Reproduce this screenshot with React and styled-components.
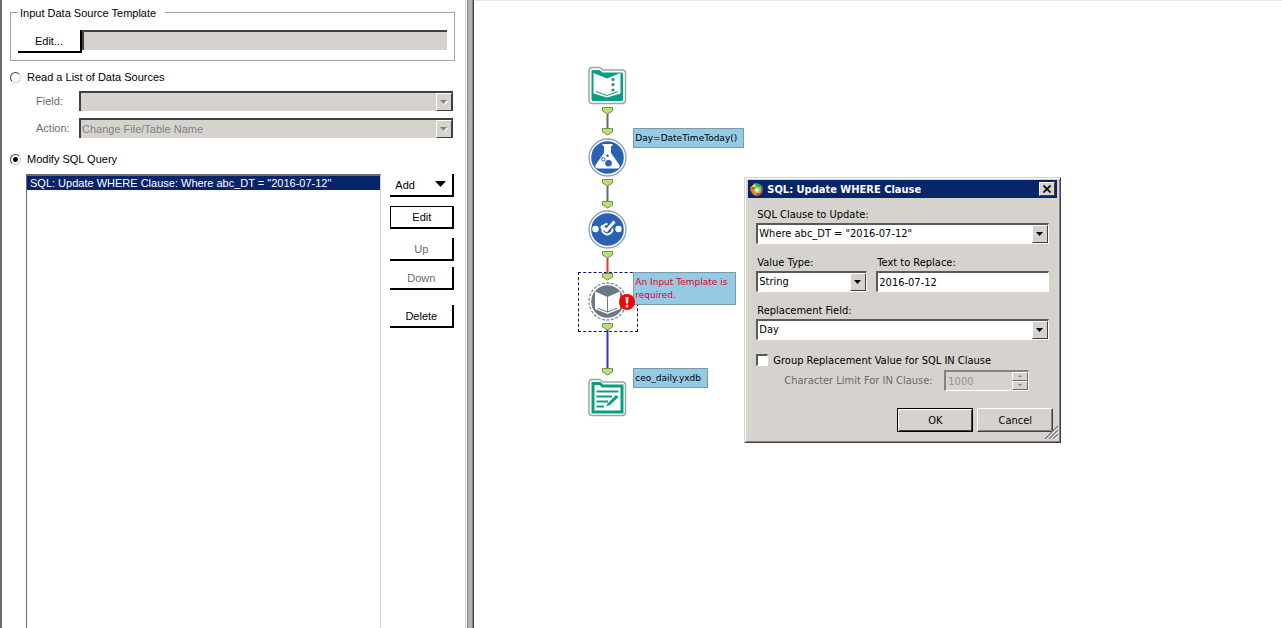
import React, {useState} from "react";
import styled, {createGlobalStyle} from "styled-components";

const GlobalStyle = createGlobalStyle`
	* {
		box-sizing: border-box;
	}
	body {
		margin: 0;
		background: #ffffff;
		color: #000000;
		font-family: "Liberation Sans", Arial, sans-serif;
		font-size: 11px;
	}
	button, input, select {
		font: inherit;
		color: inherit;
		margin: 0;
		border-radius: 0;
		outline: none;
	}
`;

const face = "#d6d3ce";

const Page = styled.div`
	display: flex;
	min-height: 100vh;
`;

/* Configuration panel */

const ConfigPanel = styled.form`
	display: flex;
	flex-direction: column;
	width: 37%;
	min-width: 400px;
	padding: 4px 19px 0 8px;
	border-left: 2px solid #6b6b6b;
`;

const Splitter = styled.div`
	display: flex;
	width: 9px;
	margin-left: -9px;
	border-left: 1px solid #d6d3ce;
	&::before {
		content: "";
		width: 4px;
		margin-left: 1px;
		background: #b4b2b4;
		border-left: 1px solid #848284;
	}
`;

const CanvasEdge = styled.div`
	width: 2px;
	margin-left: -2px;
	background: #404040;
	border-left: 1px solid #848284;
`;

const TemplateGroup = styled.fieldset`
	display: flex;
	min-width: 0;
	margin: 0;
	padding: 10px 7px 7px;
	border: 1px solid #a5a2a5;
	legend {
		padding: 2px 9px 0 2px;
		line-height: 14px;
	}
`;

const FlatButton = styled.button`
	display: flex;
	align-items: center;
	justify-content: ${(props) => (props.$menu ? "space-between" : "center")};
	width: 64px;
	height: 23px;
	padding: 0 5px;
	background: #ffffff;
	border: solid #000000;
	border-width: ${(props) => (props.$focused ? "1px 2px 2px 1px" : "0 2px 2px 0")};
	margin-bottom: ${(props) => props.$after || 0}px;
	&:disabled {
		color: #6b6b6b;
	}
`;

const PathInput = styled.input`
	flex: 1;
	min-width: 0;
	height: 20px;
	padding: 0 3px;
	background: ${face};
	border: solid #424142;
	border-width: 2px 0 0 2px;
`;

const RadioLabel = styled.label`
	display: flex;
	align-items: center;
	gap: 6px;
	height: 14px;
	margin-top: ${(props) => props.$before}px;
`;

const Radio = styled.input`
	appearance: none;
	width: 11px;
	height: 11px;
	border-radius: 50%;
	border: 1px solid;
	border-color: #424142 #d6d3ce #d6d3ce #424142;
	background: #ffffff;
	&:checked {
		background: radial-gradient(circle, #000000 2px, #ffffff 3px);
	}
`;

const FieldGrid = styled.div`
	display: grid;
	grid-template-columns: 43px 1fr;
	align-items: center;
	row-gap: 7px;
	margin: 7px 2px 0 26px;
	color: #6b6b6b;
`;

/* Drop-downs */

const ComboBox = styled.div`
	display: grid;
	height: ${(props) => (props.$flat ? 20 : 21)}px;
	min-width: 0;
	background: ${(props) => (props.$flat ? face : "#ffffff")};
	border: solid;
	border-width: ${(props) => (props.$flat ? "2px 1px 0 2px" : "2px 1px 1px 2px")};
	border-color: ${(props) => (props.$flat ? "#424142" : "#5a595a #ffffff #ffffff #5a595a")};
`;

const ComboSelect = styled.select`
	grid-area: 1 / 1;
	appearance: none;
	width: 100%;
	min-width: 0;
	padding: 0 18px 0 1px;
	border: 0;
	background: transparent;
	opacity: 1;
	&:disabled {
		color: #848284;
	}
`;

const ComboArrow = styled.span`
	grid-area: 1 / 1;
	justify-self: end;
	display: flex;
	align-items: center;
	justify-content: center;
	width: 16px;
	background: ${face};
	border: 1px solid;
	border-color: #ffffff #424142 #424142 #ffffff;
	pointer-events: none;
`;

/* Query list */

const QueryArea = styled.div`
	display: flex;
	flex: 1;
	gap: 9px;
	margin: 8px 1px 0 16px;
`;

const QueryList = styled.ul`
	flex: 1;
	min-width: 0;
	margin: 0;
	padding: 0;
	list-style: none;
	border: solid;
	border-width: 2px 1px 0 1px;
	border-color: #6b6b6b #d6d3ce #d6d3ce #6b6b6b;
`;

const QueryItem = styled.li`
	height: 14px;
	padding-left: 3px;
	line-height: 14px;
	white-space: nowrap;
	overflow: hidden;
	background: #08246b;
	color: #ffffff;
`;

const ButtonColumn = styled.div`
	display: flex;
	flex-direction: column;
`;

/* Workflow canvas */

const Canvas = styled.main`
	position: relative;
	flex: 1;
	border-top: 1px solid #e7e7e7;
`;

const Placed = styled.div`
	position: absolute;
	left: ${(props) => props.$x}px;
	top: ${(props) => props.$y}px;
	svg {
		display: block;
	}
`;

const Links = styled.svg`
	position: absolute;
	left: 104px;
	top: 99px;
`;

const Note = styled(Placed)`
	width: ${(props) => props.$w}px;
	padding: 3px 1px 2px;
	background: #94cae3;
	border: 1px solid #7b9aa5;
	color: ${(props) => (props.$error ? "#e00020" : "#000000")};
	font-family: "DejaVu Sans", Verdana, sans-serif;
	font-size: 9px;
	line-height: 13px;
`;

const Selection = styled(Placed)`
	width: 60px;
	height: 60px;
	border: 1px dashed #10106b;
`;

/* Dialog window */

const Window = styled.section`
	position: absolute;
	left: 270px;
	top: 176px;
	width: 317px;
	padding: 2px;
	background: ${face};
	border: 1px solid;
	border-color: #d6d3ce #424142 #424142 #d6d3ce;
	box-shadow: inset 1px 1px 0 #ffffff, inset -1px -1px 0 #848284;
	font-family: "DejaVu Sans Condensed", Tahoma, sans-serif;
`;

const TitleBar = styled.header`
	display: flex;
	align-items: center;
	gap: 3px;
	height: 18px;
	margin: 0 1px;
	padding: 0 2px 0 1px;
	background: #08246b;
	color: #ffffff;
	h1 {
		flex: 1;
		margin: 0;
		font-size: 11px;
		font-weight: bold;
	}
`;

const CloseButton = styled.button`
	display: flex;
	align-items: center;
	justify-content: center;
	width: 16px;
	height: 14px;
	padding: 0;
	background: ${face};
	border: 1px solid;
	border-color: #ffffff #424142 #424142 #ffffff;
`;

const WindowBody = styled.div`
	padding: 9px 9px 8px;
`;

const FieldRow = styled.div`
	display: grid;
	grid-template-columns: ${(props) => props.$columns || "1fr"};
	gap: 9px;
	margin-bottom: 11px;
`;

const Field = styled.label`
	display: flex;
	flex-direction: column;
	min-width: 0;
	line-height: 16px;
	span:first-child {
		padding-left: 1px;
	}
`;

const TextInput = styled.input`
	width: 100%;
	height: 21px;
	padding: 0 1px;
	background: #ffffff;
	border: solid;
	border-width: 2px 1px 1px 2px;
	border-color: #5a595a #ffffff #ffffff #5a595a;
`;

const CheckLabel = styled.label`
	display: flex;
	align-items: center;
	gap: 5px;
	height: 14px;
	margin-top: 13px;
`;

const CheckBox = styled.input`
	appearance: none;
	width: 12px;
	height: 12px;
	background: #ffffff;
	border: solid;
	border-width: 2px 1px 1px 2px;
	border-color: #5a595a #ffffff #ffffff #5a595a;
	&:checked {
		background: radial-gradient(circle, #000000 3px, #ffffff 4px);
	}
`;

const LimitRow = styled.div`
	display: flex;
	align-items: center;
	gap: 15px;
	margin: 3px 0 17px 28px;
	color: #6b696b;
	label {
		width: 145px;
		white-space: nowrap;
	}
`;

const Spinner = styled.div`
	display: flex;
	width: 85px;
	height: 21px;
	border: solid;
	border-width: 2px 1px 1px 2px;
	border-color: #848284 #ffffff #ffffff #848284;
	input {
		flex: 1;
		min-width: 0;
		padding: 0 2px;
		border: 0;
		background: transparent;
		color: #949294;
		appearance: textfield;
	}
	input::-webkit-inner-spin-button {
		appearance: none;
	}
`;

const SpinButtons = styled.div`
	display: flex;
	flex-direction: column;
	width: 16px;
	button {
		display: flex;
		flex: 1;
		align-items: center;
		justify-content: center;
		padding: 0;
		background: ${face};
		border: 1px solid;
		border-color: #ffffff #6b696b #6b696b #ffffff;
	}
`;

const Actions = styled.footer`
	display: flex;
	justify-content: flex-end;
	gap: 4px;
	margin-right: -4px;
`;

const DialogButton = styled.button`
	width: 76px;
	height: 24px;
	padding: 0;
	background: ${face};
	border: 1px solid;
	border-color: ${(props) => (props.$default ? "#000000" : "#ffffff #424142 #424142 #ffffff")};
	box-shadow: ${(props) =>
		props.$default
			? "inset 1px 1px 0 #ffffff, inset -1px -1px 0 #424142"
			: "inset -1px -1px 0 #848284"};
`;

const Grip = styled.svg`
	position: absolute;
	right: 2px;
	bottom: 3px;
`;

const Triangle = ({width = 7, color = "#000000", up, etched}) => {
	const height = Math.ceil(width / 2);
	const points = up ? `0,${height} ${width},${height} ${width / 2},0` : `0,0 ${width},0 ${width / 2},${height}`;
	return (
		<svg width={width + 1} height={height + 1} aria-hidden="true">
			{etched && <polygon points={points} fill="#ffffff" transform="translate(1 1)"/>}
			<polygon points={points} fill={color}/>
		</svg>
	);
};

const Combo = ({id, value, options = [], flat, disabled, label, onChange}) => (
	<ComboBox $flat={flat}>
		<ComboSelect id={id} aria-label={label} value={value} disabled={disabled} onChange={(e) => onChange && onChange(e.target.value)}>
			{[value, ...options].map((option) => <option key={option}>{option}</option>)}
		</ComboSelect>
		<ComboArrow>
			<Triangle color={disabled ? "#848284" : "#000000"} etched={disabled}/>
		</ComboArrow>
	</ComboBox>
);

const Disc = ({color, dashed}) => (
	<>
		<circle cx="19.5" cy="19.5" r="18.5" fill="#ffffff" stroke={dashed ? "#848a94" : "#8c9ebd"} strokeWidth="1.3" strokeDasharray={dashed ? "3 1.5" : undefined}/>
		<circle cx="19.5" cy="19.5" r="16.3" fill={color}/>
	</>
);

const InputIcon = () => (
	<svg width="39" height="39">
		<path d="M4 1.5H12L15 4H34Q37.5 4 37.5 7V34Q37.5 37.5 34 37.5H4Q1 37.5 1 34V5Q1 1.5 4 1.5Z" fill="#ffffff" stroke="#9ca5a5" strokeWidth="1.5"/>
		<path d="M4.5 4H11.5L14.5 6.5H33.5Q35 6.5 35 8V33.5Q35 35 33.5 35H5Q3.5 35 3.5 33.5V5.500Q3.5 4 4.5 4Z" fill="#089e84"/>
		<path d="M5.5 7L19 12.5L32.5 7V27.5L19 31.5L5.5 27.5Z" fill="#ffffff"/>
		<path d="M8 25.5L19 29.5L30 25.5" fill="none" stroke="#089e84" strokeWidth="1"/>
		<circle cx="25" cy="13.5" r="1.6" fill="#089e84"/>
		<circle cx="25" cy="18.7" r="1.6" fill="#089e84"/>
		<circle cx="25" cy="24" r="1.6" fill="#089e84"/>
	</svg>
);

const FormulaIcon = () => (
	<svg width="39" height="39">
		<Disc color="#2961b5"/>
		<path d="M14.5 6H24.5V8H23V15L31.5 27Q32.5 30.5 29 30.5H10Q6.5 30.5 7.5 27L16 15V8H14.5Z" fill="#ffffff"/>
		<circle cx="20.5" cy="25.3" r="3.3" fill="#2961b5"/>
		<circle cx="15.3" cy="21.3" r="1.7" fill="#ffffff" stroke="#2961b5"/>
		<circle cx="19.5" cy="17.8" r="1.2" fill="#2961b5"/>
	</svg>
);

const SelectIcon = () => (
	<svg width="39" height="39">
		<Disc color="#2961b5"/>
		<circle cx="7.5" cy="19" r="3.2" fill="#ffffff"/>
		<circle cx="30.5" cy="19" r="3.2" fill="#ffffff"/>
		<path d="M19.5 14A5.2 5.2 0 1 0 24.5 18.5" fill="none" stroke="#ffffff" strokeWidth="2"/>
		<path d="M13 16L18.5 20.5L26.5 11.5" fill="none" stroke="#ffffff" strokeWidth="3"/>
	</svg>
);

const DynamicIcon = () => (
	<svg width="39" height="39">
		<Disc color="#6b7984" dashed/>
		<path d="M7 9.5L19.5 15L32 9.5V27L19.5 32L7 27Z" fill="#ffffff"/>
		<path d="M9.5 26L19.5 30L29.5 26M19.5 15V30" fill="none" stroke="#6b7984" strokeWidth="1"/>
	</svg>
);

const OutputIcon = () => (
	<svg width="39" height="39">
		<path d="M4 1.5H12L15 4H34Q37.5 4 37.5 7V34Q37.5 37.5 34 37.5H4Q1 37.5 1 34V5Q1 1.5 4 1.5Z" fill="#ffffff" stroke="#9ca5a5" strokeWidth="1.5"/>
		<path d="M5 5.500H12L14.5 8H34V34H5Z" fill="#ffffff" stroke="#089e84" strokeWidth="3"/>
		<path d="M8.5 13.5H30.5M8.5 18.500H24M8.5 23.5H20M8.5 28.5H16" stroke="#089e84" strokeWidth="2.2"/>
		<path d="M18 28.5L20 25L28 17L30.5 19L22 27Z" fill="#089e84"/>
	</svg>
);

const ErrorBadge = () => (
	<svg width="16" height="16">
		<circle cx="8" cy="8" r="8" fill="#ff0000"/>
		<path d="M6.5 3H9.5L9 9.5H7Z" fill="#ffffff"/>
		<circle cx="8" cy="12" r="1.5" fill="#ffffff"/>
	</svg>
);

const AppIcon = () => (
	<svg width="15" height="15" aria-hidden="true">
		<path d="M1 6L6 1L8 5Z" fill="#ffcf31"/>
		<path d="M6 1Q13 1 14 7L8 7Z" fill="#29a66b"/>
		<path d="M14 7Q14 13 8 14L7 8Z" fill="#e73163"/>
		<path d="M8 14Q2 13 1 6L7 7Z" fill="#f77921"/>
		<circle cx="8.5" cy="8" r="3.5" fill="#8cd652"/>
		<circle cx="8" cy="8" r="1.8" fill="#ffffff"/>
	</svg>
);

const links = [
	{from: 107, to: 128, color: "#6b696b"},
	{from: 179, to: 201, color: "#6b696b"},
	{from: 251, to: 273, color: "#e73142"},
	{from: 323, to: 368, color: "#3930b5"},
];

const Anchor = ({y}) => (
	<path d={`M24.5 ${y + 0.5}h10v3.5l-5 3l-5 -3z`} fill="#b5e36b" stroke="#7b8a63"/>
);

const Workflow = () => (
	<>
		<Selection $x={104} $y={271}/>
		<Links width="60" height="290" aria-hidden="true">
			{links.map(({from, to, color}) => (
				<g key={from} transform="translate(0 -100)">
					<path d={`M29.5 ${from + 6}V${to}`} stroke={color} strokeWidth="2"/>
					<Anchor y={from}/>
					<Anchor y={to}/>
				</g>
			))}
		</Links>
		<Placed $x={114} $y={65}><InputIcon/></Placed>
		<Placed $x={114} $y={137}><FormulaIcon/></Placed>
		<Placed $x={114} $y={209}><SelectIcon/></Placed>
		<Placed $x={114} $y={281}><DynamicIcon/></Placed>
		<Placed $x={114} $y={377}><OutputIcon/></Placed>
		<Note $x={159} $y={127} $w={111}>Day=DateTimeToday()</Note>
		<Note $x={159} $y={271} $w={103} $error>An Input Template is required.</Note>
		<Note $x={159} $y={367} $w={75}>ceo_daily.yxdb</Note>
		<Placed $x={145} $y={293}><ErrorBadge/></Placed>
	</>
);

const UpdateDialog = () => {
	const [clause, setClause] = useState('Where abc_DT = "2016-07-12"');
	const [text, setText] = useState("2016-07-12");
	const [grouped, setGrouped] = useState(false);

	return (
		<Window role="dialog" aria-labelledby="dialog-title">
			<TitleBar>
				<AppIcon/>
				<h1 id="dialog-title">SQL: Update WHERE Clause</h1>
				<CloseButton type="button" aria-label="Close">
					<svg width="8" height="8"><path d="M0.5 0.5L7.5 7.5M7.5 0.5L0.5 7.5" stroke="#000000" strokeWidth="1.7"/></svg>
				</CloseButton>
			</TitleBar>
			<WindowBody>
				<FieldRow>
					<Field>
						<span>SQL Clause to Update:</span>
						<Combo value={clause} onChange={setClause}/>
					</Field>
				</FieldRow>
				<FieldRow $columns="111px 1fr">
					<Field>
						<span>Value Type:</span>
						<Combo value="String"/>
					</Field>
					<Field>
						<span>Text to Replace:</span>
						<TextInput type="text" value={text} onChange={(e) => setText(e.target.value)}/>
					</Field>
				</FieldRow>
				<FieldRow>
					<Field>
						<span>Replacement Field:</span>
						<Combo value="Day"/>
					</Field>
				</FieldRow>
				<CheckLabel>
					<CheckBox type="checkbox" checked={grouped} onChange={(e) => setGrouped(e.target.checked)}/>
					Group Replacement Value for SQL IN Clause
				</CheckLabel>
				<LimitRow>
					<label htmlFor="limit">Character Limit For IN Clause:</label>
					<Spinner>
						<input id="limit" type="number" defaultValue="1000" disabled={!grouped}/>
						<SpinButtons>
							<button type="button" aria-label="Increase" disabled={!grouped}><Triangle width={4} color="#848284" up/></button>
							<button type="button" aria-label="Decrease" disabled={!grouped}><Triangle width={4} color="#848284"/></button>
						</SpinButtons>
					</Spinner>
				</LimitRow>
				<Actions>
					<DialogButton type="button" $default>OK</DialogButton>
					<DialogButton type="button">Cancel</DialogButton>
				</Actions>
			</WindowBody>
			<Grip width="14" height="14" aria-hidden="true">
				<path d="M1 14L14 1M5 14L14 5M9 14L14 9" stroke="#848284" strokeWidth="1.5"/>
				<path d="M3 14L14 3M7 14L14 7M11 14L14 11" stroke="#ffffff"/>
			</Grip>
		</Window>
	);
};

const App = () => {
	const [mode, setMode] = useState("modify");

	return (
		<Page>
			<GlobalStyle/>
			<ConfigPanel>
				<TemplateGroup>
					<legend>Input Data Source Template</legend>
					<FlatButton type="button">Edit...</FlatButton>
					<PathInput type="text" aria-label="Input Data Source Template" readOnly/>
				</TemplateGroup>
				<RadioLabel $before={9}>
					<Radio type="radio" name="mode" checked={mode === "list"} onChange={() => setMode("list")}/>
					Read a List of Data Sources
				</RadioLabel>
				<FieldGrid>
					<label htmlFor="field">Field:</label>
					<Combo id="field" value="" flat disabled/>
					<label htmlFor="action">Action:</label>
					<Combo id="action" value="Change File/Table Name" flat disabled/>
				</FieldGrid>
				<RadioLabel $before={14}>
					<Radio type="radio" name="mode" checked={mode === "modify"} onChange={() => setMode("modify")}/>
					Modify SQL Query
				</RadioLabel>
				<QueryArea>
					<QueryList>
						<QueryItem>SQL: Update WHERE Clause: Where abc_DT = "2016-07-12"</QueryItem>
					</QueryList>
					<ButtonColumn>
						<FlatButton type="button" $menu $after={9}>Add <Triangle width={11}/></FlatButton>
						<FlatButton type="button" $focused $after={9}>Edit</FlatButton>
						<FlatButton type="button" disabled $after={6}>Up</FlatButton>
						<FlatButton type="button" disabled $after={15}>Down</FlatButton>
						<FlatButton type="button">Delete</FlatButton>
					</ButtonColumn>
				</QueryArea>
			</ConfigPanel>
			<Splitter/>
			<CanvasEdge/>
			<Canvas>
				<Workflow/>
				<UpdateDialog/>
			</Canvas>
		</Page>
	);
};

export default App;
